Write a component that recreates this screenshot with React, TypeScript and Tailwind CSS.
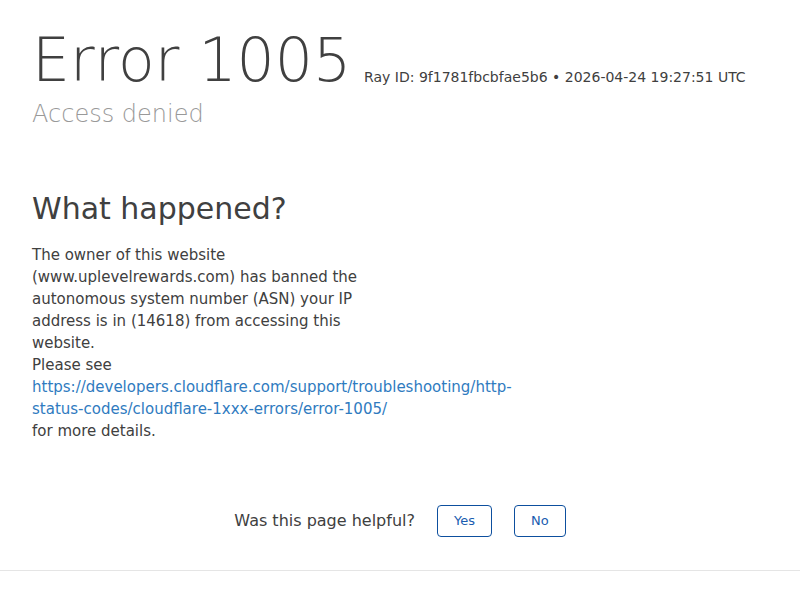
import React from "react";

const RAY = "9f1781fbcbfae5b6";
const STAMP = "2026-04-24 19:27:51 UTC";
const DOCS = "https://developers.cloudflare.com/support/troubleshooting/http-status-codes/cloudflare-1xxx-errors/error-1005/";

export default function App() {
  return (
    <div className="min-h-screen bg-white font-['DejaVu_Sans',sans-serif] text-[#404040]">
      <div className="px-8 pt-[23px]">
        <h1 className="text-[60px] leading-[75px] font-extralight text-[#404040] whitespace-nowrap">
          Error 1005
          <span className="ml-[13px] align-[-1px] text-[14px] leading-none font-normal">
            Ray ID: {RAY} &bull; {STAMP}
          </span>
        </h1>
        <h2 className="mt-[1px] text-[24px] leading-[30px] font-extralight text-[#999999]">Access denied</h2>

        <section className="mt-[62px] w-[368px]">
          <h2 className="text-[30px] leading-[36px] font-normal">What happened?</h2>
          <p className="mt-[17px] text-[15px] leading-[22px]">
            The owner of this website (www.uplevelrewards.com) has banned the autonomous system
            number (ASN) your IP address is in (14618) from accessing this website.
            <br />
            Please see{" "}
            <a href={DOCS} className="text-[#2f7bbf]">
              {DOCS}
            </a>{" "}
            for more details.
          </p>
        </section>
      </div>

      <div className="mt-[63px] flex items-center justify-center gap-[22px]">
        <span className="text-[16px]">Was this page helpful?</span>
        <button className="h-[32px] rounded-[4px] border border-[#0d4f9e] px-[16px] text-[13px] text-[#1a5cb0]">
          Yes
        </button>
        <button className="h-[32px] rounded-[4px] border border-[#0d4f9e] px-[16px] text-[13px] text-[#1a5cb0]">
          No
        </button>
      </div>

      <div className="mt-[33px] border-t border-[#e5e5e5]" />
    </div>
  );
}
